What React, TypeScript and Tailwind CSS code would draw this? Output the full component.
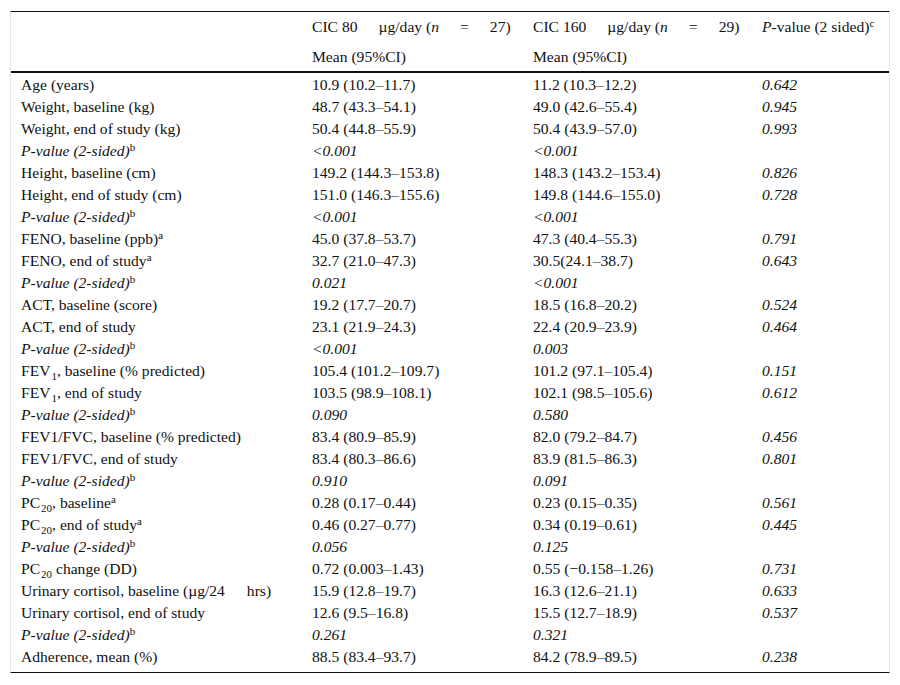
type Row = {
  label: React.ReactNode;
  a: string;
  b: string;
  p?: string;
  italic?: boolean;
};

const Sup = ({ children }: { children: React.ReactNode }) => (
  <sup className="text-[11px] not-italic">{children}</sup>
);

const Sub = ({ children }: { children: React.ReactNode }) => (
  <sub className="text-[11px] -bottom-[0.4em] pl-[1px]">{children}</sub>
);

const Gap = ({ w = "w-[21px]" }: { w?: string }) => (
  <span className={`inline-block ${w}`} />
);

const pv = (
  <>
    P-value (2-sided)<Sup>b</Sup>
  </>
);

const rows: Row[] = [
  { label: "Age (years)", a: "10.9 (10.2–11.7)", b: "11.2 (10.3–12.2)", p: "0.642" },
  { label: "Weight, baseline (kg)", a: "48.7 (43.3–54.1)", b: "49.0 (42.6–55.4)", p: "0.945" },
  { label: "Weight, end of study (kg)", a: "50.4 (44.8–55.9)", b: "50.4 (43.9–57.0)", p: "0.993" },
  { label: pv, a: "<0.001", b: "<0.001", italic: true },
  { label: "Height, baseline (cm)", a: "149.2 (144.3–153.8)", b: "148.3 (143.2–153.4)", p: "0.826" },
  { label: "Height, end of study (cm)", a: "151.0 (146.3–155.6)", b: "149.8 (144.6–155.0)", p: "0.728" },
  { label: pv, a: "<0.001", b: "<0.001", italic: true },
  {
    label: (
      <>
        FENO, baseline (ppb)<Sup>a</Sup>
      </>
    ),
    a: "45.0 (37.8–53.7)",
    b: "47.3 (40.4–55.3)",
    p: "0.791",
  },
  {
    label: (
      <>
        FENO, end of study<Sup>a</Sup>
      </>
    ),
    a: "32.7 (21.0–47.3)",
    b: "30.5(24.1–38.7)",
    p: "0.643",
  },
  { label: pv, a: "0.021", b: "<0.001", italic: true },
  { label: "ACT, baseline (score)", a: "19.2 (17.7–20.7)", b: "18.5 (16.8–20.2)", p: "0.524" },
  { label: "ACT, end of study", a: "23.1 (21.9–24.3)", b: "22.4 (20.9–23.9)", p: "0.464" },
  { label: pv, a: "<0.001", b: "0.003", italic: true },
  {
    label: (
      <>
        FEV<Sub>1</Sub>, baseline (% predicted)
      </>
    ),
    a: "105.4 (101.2–109.7)",
    b: "101.2 (97.1–105.4)",
    p: "0.151",
  },
  {
    label: (
      <>
        FEV<Sub>1</Sub>, end of study
      </>
    ),
    a: "103.5 (98.9–108.1)",
    b: "102.1 (98.5–105.6)",
    p: "0.612",
  },
  { label: pv, a: "0.090", b: "0.580", italic: true },
  { label: "FEV1/FVC, baseline (% predicted)", a: "83.4 (80.9–85.9)", b: "82.0 (79.2–84.7)", p: "0.456" },
  { label: "FEV1/FVC, end of study", a: "83.4 (80.3–86.6)", b: "83.9 (81.5–86.3)", p: "0.801" },
  { label: pv, a: "0.910", b: "0.091", italic: true },
  {
    label: (
      <>
        PC<Sub>20</Sub>, baseline<Sup>a</Sup>
      </>
    ),
    a: "0.28 (0.17–0.44)",
    b: "0.23 (0.15–0.35)",
    p: "0.561",
  },
  {
    label: (
      <>
        PC<Sub>20</Sub>, end of study<Sup>a</Sup>
      </>
    ),
    a: "0.46 (0.27–0.77)",
    b: "0.34 (0.19–0.61)",
    p: "0.445",
  },
  { label: pv, a: "0.056", b: "0.125", italic: true },
  {
    label: (
      <>
        PC<Sub>20</Sub> change (DD)
      </>
    ),
    a: "0.72 (0.003–1.43)",
    b: "0.55 (−0.158–1.26)",
    p: "0.731",
  },
  {
    label: (
      <>
        Urinary cortisol, baseline (µg/24
        <Gap w="w-[22px]" />
        hrs)
      </>
    ),
    a: "15.9 (12.8–19.7)",
    b: "16.3 (12.6–21.1)",
    p: "0.633",
  },
  { label: "Urinary cortisol, end of study", a: "12.6 (9.5–16.8)", b: "15.5 (12.7–18.9)", p: "0.537" },
  { label: pv, a: "0.261", b: "0.321", italic: true },
  { label: "Adherence, mean (%)", a: "88.5 (83.4–93.7)", b: "84.2 (78.9–89.5)", p: "0.238" },
];

const App = () => {
  return (
    <div className="min-h-[685px] bg-white pt-[11px] pl-[10px] [font-family:'Liberation_Serif','Times_New_Roman',serif] text-[15.6px] text-[#111]">
      <div className="w-[880px] border-x border-[#e6e6e6] border-t border-t-[#111] border-b border-b-[#111] pb-[5px]">
        <table className="table-fixed border-collapse w-[878px]">
          <colgroup>
            <col className="w-[291px]" />
            <col className="w-[221px]" />
            <col className="w-[229px]" />
            <col className="w-[137px]" />
          </colgroup>
          <thead>
            <tr className="h-[30px]">
              <th className="p-0 pl-[10px] font-normal text-left" />
              <th className="p-0 pl-[10px] font-normal text-left whitespace-nowrap">
                CIC 80
                <Gap />
                µg/day (<i>n</i>
                <Gap />=<Gap />
                27)
              </th>
              <th className="p-0 pl-[10px] font-normal text-left whitespace-nowrap">
                CIC 160
                <Gap />
                µg/day (<i>n</i>
                <Gap />=<Gap />
                29)
              </th>
              <th className="p-0 pl-[10px] font-normal text-left whitespace-nowrap">
                <i>P</i>-value (2 sided)<sup className="text-[11px]">c</sup>
              </th>
            </tr>
            <tr className="h-[30px]">
              <th className="p-0 border-b-2 border-[#111]" />
              <th className="p-0 pl-[10px] font-normal text-left border-b-2 border-[#111]">
                Mean (95%CI)
              </th>
              <th className="p-0 pl-[10px] font-normal text-left border-b-2 border-[#111]">
                Mean (95%CI)
              </th>
              <th className="p-0 border-b-2 border-[#111]" />
            </tr>
          </thead>
          <tbody>
            {rows.map((r, i) => (
              <tr key={i} className={`h-[22px] leading-[21px] ${r.italic ? "italic" : ""}`}>
                <td className="p-0 pl-[10px] pt-[1px] whitespace-nowrap">{r.label}</td>
                <td className="p-0 pl-[10px] pt-[1px] whitespace-nowrap">{r.a}</td>
                <td className="p-0 pl-[10px] pt-[1px] whitespace-nowrap">{r.b}</td>
                <td className="p-0 pl-[10px] pt-[1px] whitespace-nowrap italic">{r.p ?? ""}</td>
              </tr>
            ))}
          </tbody>
        </table>
      </div>
    </div>
  );
};

export default App;
